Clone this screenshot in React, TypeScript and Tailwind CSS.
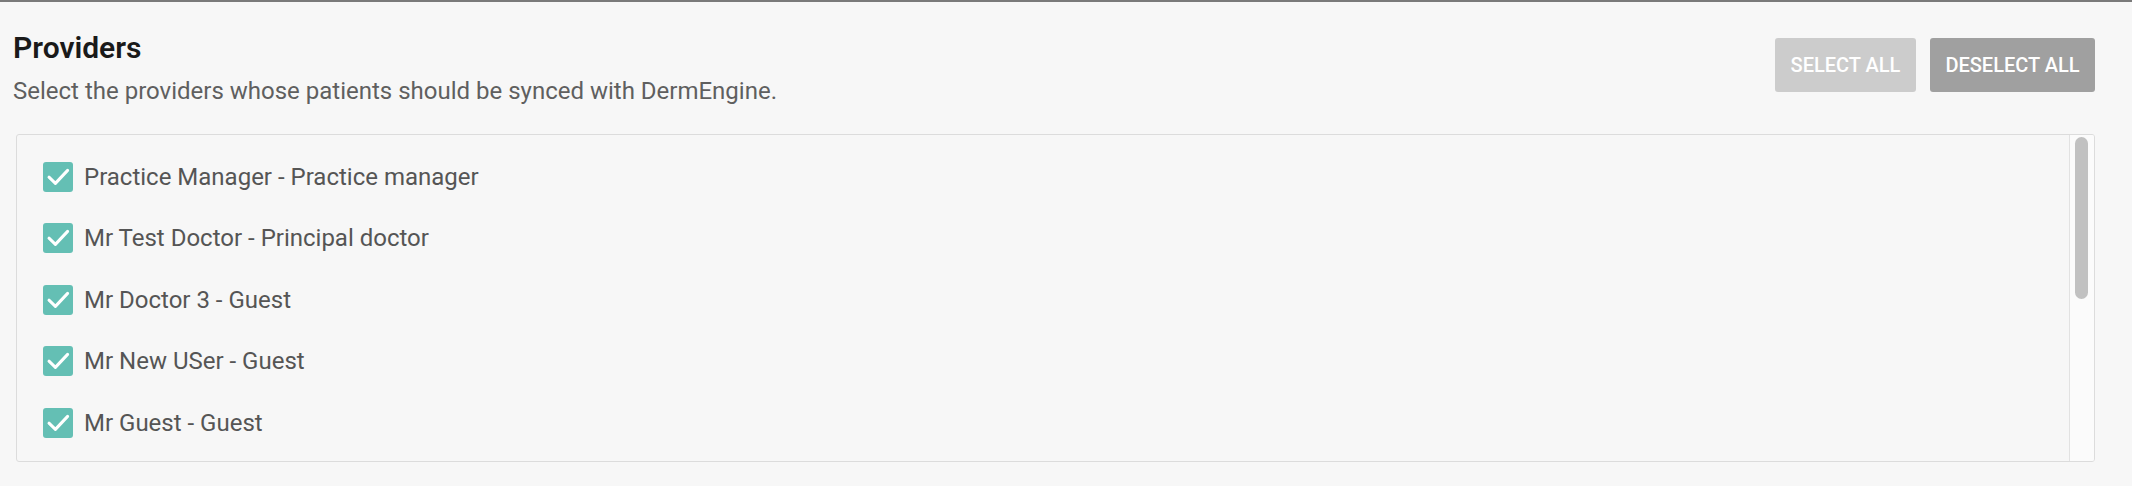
import React from "react";

const providers = [
  "Practice Manager - Practice manager",
  "Mr Test Doctor - Principal doctor",
  "Mr Doctor 3 - Guest",
  "Mr New USer - Guest",
  "Mr Guest - Guest",
];

function Check() {
  return (
    <span className="flex h-[30px] w-[30px] shrink-0 items-center justify-center rounded-[3px] bg-[#64bfb4]">
      <svg width="30" height="30" viewBox="0 0 30 30" fill="none">
        <path d="M6 15.2 L12.4 21.4 L24.6 8.4" stroke="#ffffff" strokeWidth="3" strokeLinecap="round" strokeLinejoin="round" />
      </svg>
    </span>
  );
}

export default function App() {
  return (
    <div className="h-[486px] w-full overflow-hidden border-t-2 border-[#7a7a7a] bg-[#f7f7f7] font-['Roboto',sans-serif]">
      <div className="flex items-start justify-between pl-[13px] pr-[37px] pt-[30px]">
        <div>
          <h1 className="text-[30px] font-semibold leading-[32px] text-[#1a1a1a]">Providers</h1>
          <p className="mt-[12px] text-[24px] leading-[30px] text-[#5f5f5f]">
            Select the providers whose patients should be synced with DermEngine.
          </p>
        </div>
        <div className="mt-[6px] flex gap-[14px]">
          <button className="h-[54px] w-[141px] rounded-[3px] bg-[#cccccc] text-[20px] font-medium uppercase text-white">
            Select all
          </button>
          <button className="h-[54px] w-[165px] rounded-[3px] bg-[#a0a0a0] text-[20px] font-medium uppercase text-white">
            Deselect all
          </button>
        </div>
      </div>
      <div className="ml-[16px] mr-[37px] mt-[28px] flex h-[328px] overflow-hidden rounded-[3px] border border-[#dcdcdc]">
        <div className="flex-1 overflow-hidden pl-[26px] pt-[11px]">
          {providers.map((p) => (
            <div key={p} className="flex h-[61.5px] items-center gap-[11px]">
              <Check />
              <span className="text-[24px] leading-[28px] text-[#555555]">{p}</span>
            </div>
          ))}
        </div>
        <div className="w-[25px] shrink-0 border-l border-[#e2e2e2] bg-[#fbfbfb] pl-[5px] pt-[2px]">
          <div className="h-[162px] w-[13px] rounded-full bg-[#c1c1c1]" />
        </div>
      </div>
    </div>
  );
}
